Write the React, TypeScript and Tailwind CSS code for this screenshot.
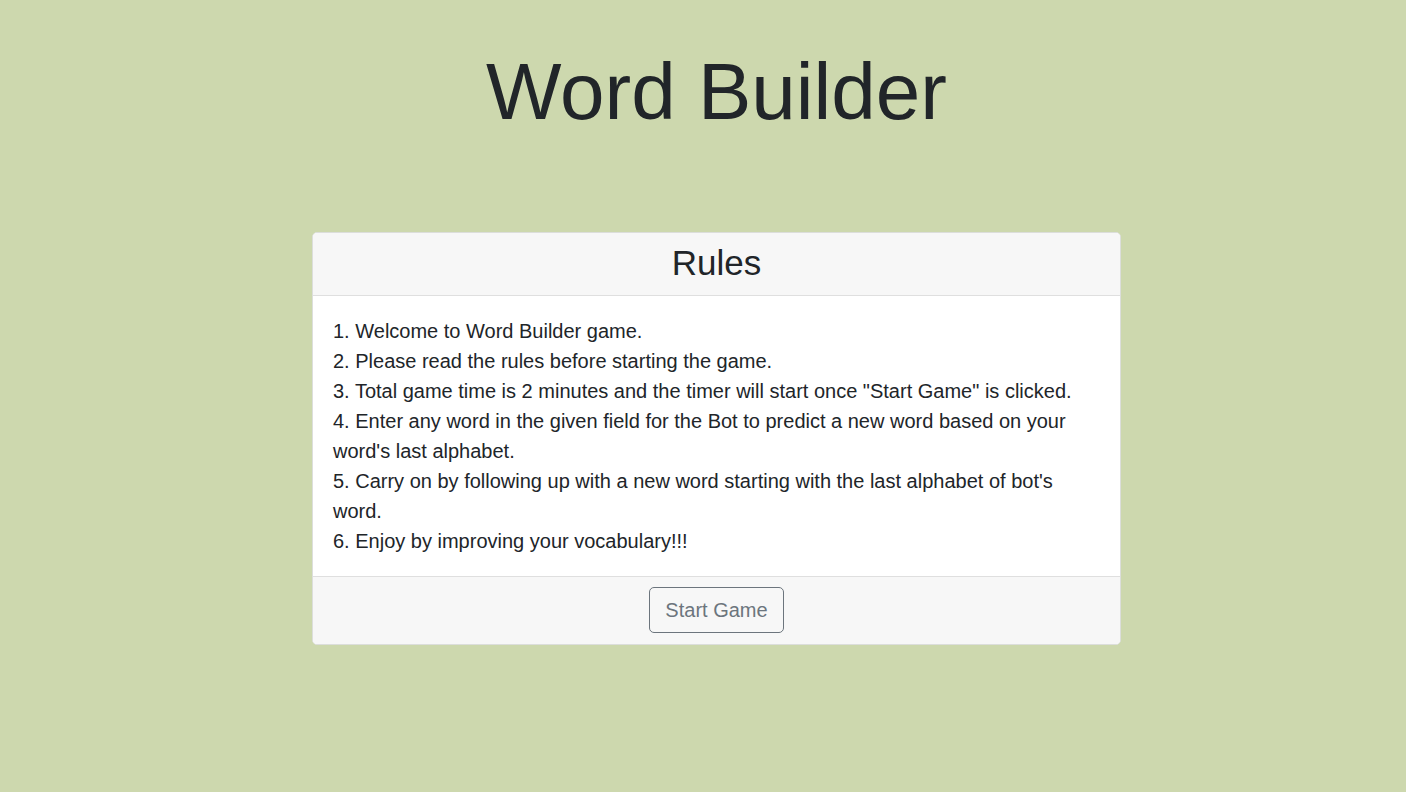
export default function App() {
  const rules = [
    "1. Welcome to Word Builder game.",
    "2. Please read the rules before starting the game.",
    '3. Total game time is 2 minutes and the timer will start once "Start Game" is clicked.',
    "4. Enter any word in the given field for the Bot to predict a new word based on your word's last alphabet.",
    "5. Carry on by following up with a new word starting with the last alphabet of bot's word.",
    "6. Enjoy by improving your vocabulary!!!",
  ];
  return (
    <div
      className="min-h-[792px] w-full bg-[#cdd8ae] text-[#212529]"
      style={{ fontFamily: '"Liberation Sans", Arial, sans-serif' }}
    >
      <div className="ml-[312px] w-[809px] pt-[44px]">
        <h1 className="text-center text-[80px] leading-[96px] font-normal">Word Builder</h1>
        <div className="mt-[92px] rounded-[5px] border border-[#dcdedb] bg-white overflow-hidden">
          <div className="h-[63px] pb-[3px] flex items-center justify-center bg-[#f7f7f7] border-b border-[#dfdfdf]">
            <h3 className="text-[35px] leading-[42px] font-normal">Rules</h3>
          </div>
          <div className="px-[20px] py-[20px] text-[20px] leading-[30px]">
            {rules.map((r) => (
              <div key={r}>{r}</div>
            ))}
          </div>
          <div className="bg-[#f7f7f7] border-t border-[#dfdfdf] pt-[10px] pb-[11px] flex justify-center">
            <button className="h-[46px] px-[15px] border border-[#6c757d] rounded-[5px] text-[#6c757d] text-[20px] leading-[30px] bg-transparent">
              Start Game
            </button>
          </div>
        </div>
      </div>
    </div>
  );
}
